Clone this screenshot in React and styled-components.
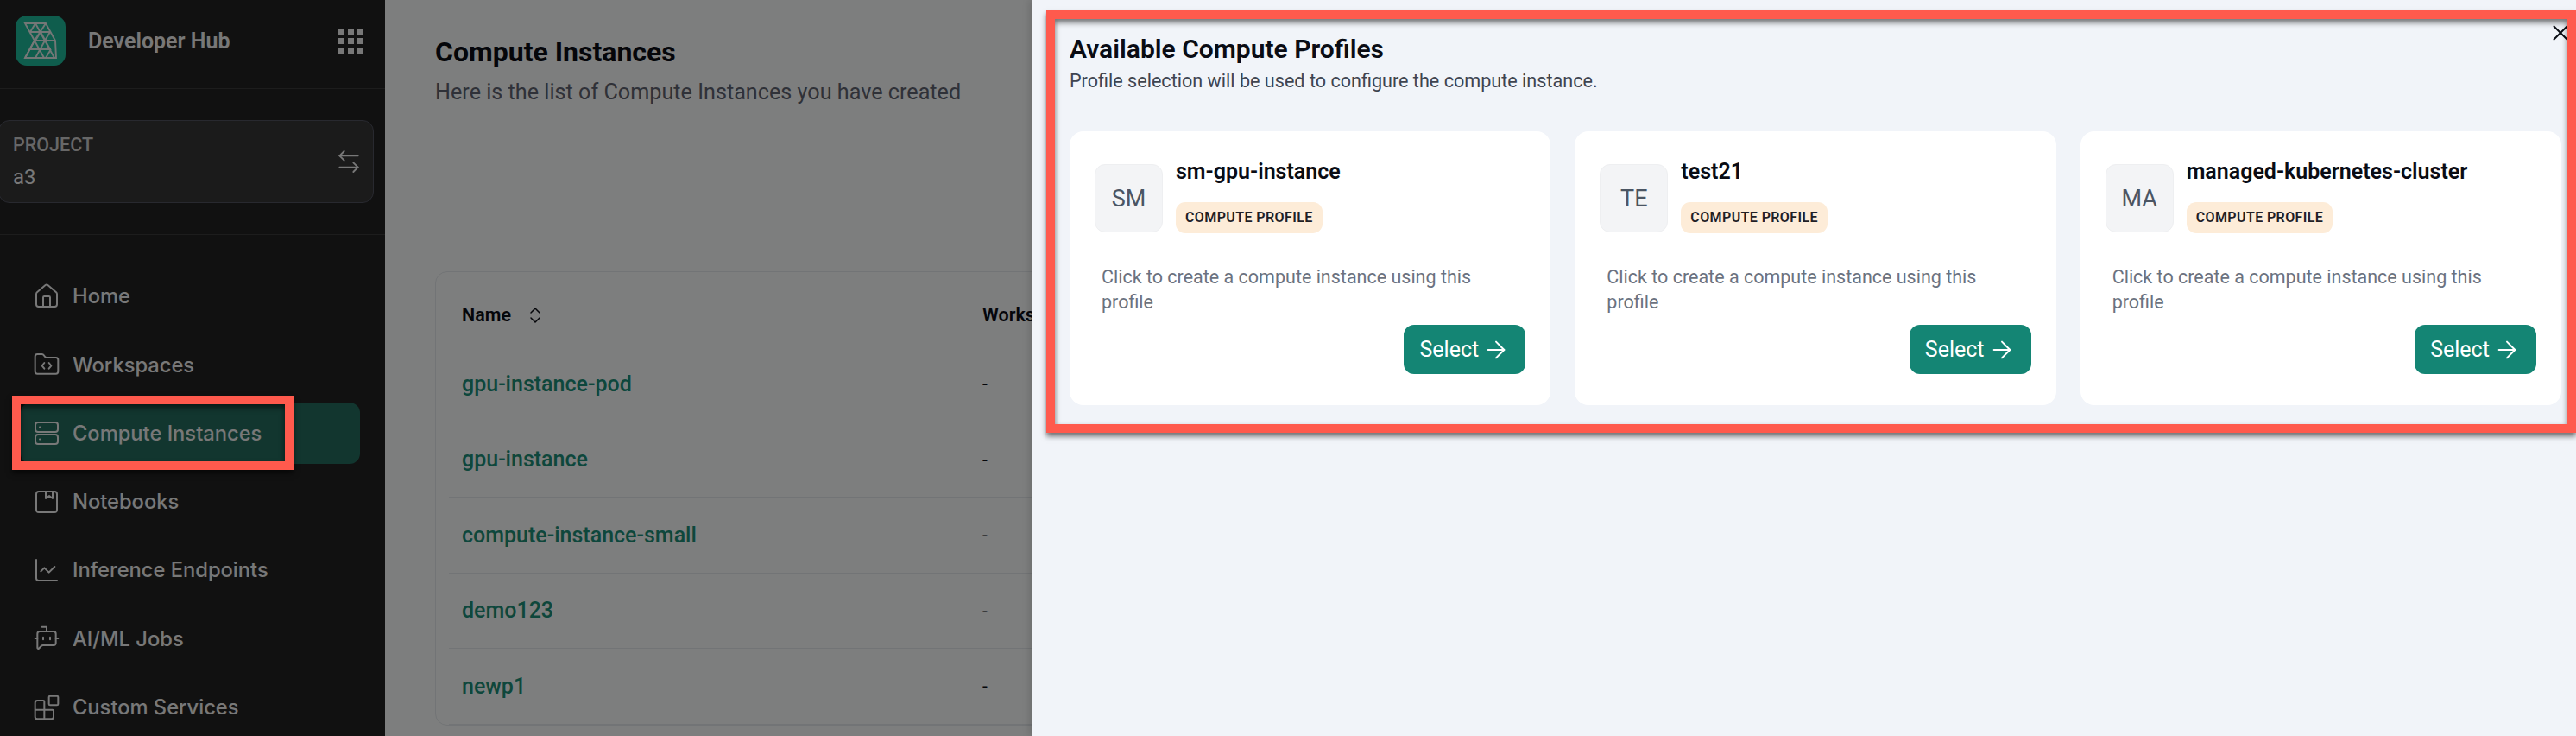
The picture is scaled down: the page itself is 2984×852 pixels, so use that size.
import React from 'react';
import styled, { createGlobalStyle } from 'styled-components';
import {
  House,
  FolderCode,
  ChartLine,
  BotMessageSquare,
  Blocks,
  ArrowLeftRight,
  ArrowRight,
  ChevronsUpDown,
  X
} from 'lucide-react';

const GlobalStyle = createGlobalStyle`
  html, body {
    margin: 0;
    padding: 0;
    background: #fbfdfc;
  }
  * {
    box-sizing: border-box;
  }
`;

const Page = styled.div`
  position: relative;
  display: flex;
  width: 2984px;
  height: 852px;
  overflow: hidden;
  font-family: Roboto, "Liberation Sans", sans-serif;
`;

const Sidebar = styled.aside`
  flex: 0 0 446px;
  display: flex;
  flex-direction: column;
  background: #222222;
  color: #f0f0f0;

  & > * {
    flex: 0 0 auto;
  }
`;

const Brand = styled.div`
  height: 103px;
  padding: 0 25px 8px 18px;
  display: flex;
  align-items: center;
  border-bottom: 1px solid #3a3a3a;
`;

const LogoMark = styled.div`
  width: 58px;
  height: 58px;
  border-radius: 13px;
  background: #1ebb9b;
  margin-right: 26px;
`;

const BrandName = styled.span`
  flex: 1;
  font-size: 25px;
  font-weight: 600;
`;

const AppGrid = styled.div`
  display: grid;
  grid-template-columns: repeat(3, 7px);
  grid-auto-rows: 7px;
  gap: 4px;

  span {
    background: #f0f0f0;
  }
`;

const ProjectSection = styled.div`
  padding: 36px 13px 36px 0;
  border-bottom: 1px solid #3a3a3a;
`;

const ProjectBox = styled.div`
  height: 96px;
  margin-left: -2px;
  padding: 0 12px 0 16px;
  display: flex;
  align-items: center;
  justify-content: space-between;
  background: #363636;
  border: 1px solid #50525f;
  border-radius: 13px;
`;

const ProjectLabel = styled.div`
  font-size: 21.5px;
  font-weight: 500;
  line-height: 30px;
  color: #cfcfcf;
`;

const ProjectName = styled.div`
  font-size: 24px;
  line-height: 32px;
  margin-top: 6px;
`;

const Nav = styled.nav`
  display: flex;
  flex-direction: column;
  gap: 7.8px;
  padding-top: 35px;
  font-family: Inter, Roboto, sans-serif;
`;

const NavRow = styled.div`
  flex: 0 0 71.5px;
  width: 393px;
  margin-left: 24px;
  padding-left: 14px;
  display: flex;
  align-items: center;
  gap: 14px;
  font-size: 23.7px;
  font-weight: 500;
  border-radius: 12px;
  background: ${props => props.active ? '#246c5e' : 'transparent'};

  svg {
    flex: 0 0 32px;
  }
`;

const Main = styled.main`
  flex: 1;
  min-width: 0;
  padding: 42px 0 0 58px;
  background: #fbfdfc;
`;

const Title = styled.h1`
  margin: 0;
  font-size: 32px;
  line-height: 36px;
  font-weight: 700;
  color: #0a0c14;
`;

const Subtitle = styled.p`
  margin: 13px 0 0;
  font-size: 25.2px;
  line-height: 32px;
  color: #5f6370;
`;

const TableCard = styled.section`
  margin: 191px 0 0 0;
  width: 1400px;
  padding: 0 15px;
  border: 1px solid #e4e8ec;
  border-radius: 14px;
`;

const TableRow = styled.div`
  height: 87.5px;
  padding-left: 15px;
  display: grid;
  grid-template-columns: 603px 1fr;
  align-items: center;
  border-bottom: 1.5px solid #e4e8ec;
`;

const HeaderRow = styled(TableRow)`
  height: 86px;
  padding-top: 14px;
  font-size: 21.5px;
  font-weight: 600;
  color: #0a0c14;
`;

const HeaderCell = styled.div`
  display: flex;
  align-items: center;
  gap: 16px;
`;

const NameCell = styled.div`
  font-size: 25px;
  font-weight: 500;
  color: #1c8f79;
`;

const DashCell = styled.div`
  font-size: 21px;
  color: #0a0c14;
`;

const Backdrop = styled.div`
  position: absolute;
  inset: 0;
  background: rgba(0, 0, 0, 0.5);
`;

const Drawer = styled.div`
  position: absolute;
  top: 0;
  bottom: 0;
  left: 1196px;
  right: 0;
  padding: 39px 17px 0 43px;
  background: #f1f4f9;
  box-shadow: -4px 0 8px rgba(0, 0, 0, 0.12);
`;

const CloseButton = styled.button`
  position: absolute;
  top: 23px;
  right: 3px;
  width: 30px;
  height: 30px;
  padding: 0;
  border: 0;
  background: none;
  color: #0a0c14;
`;

const DrawerTitle = styled.h2`
  margin: 0;
  font-size: 30px;
  line-height: 36px;
  font-weight: 600;
  color: #0a0c14;
`;

const DrawerHint = styled.p`
  margin: 5px 0 0;
  font-size: 21.6px;
  line-height: 28px;
  color: #3f4450;
`;

const Cards = styled.div`
  margin-top: 44px;
  display: grid;
  grid-template-columns: repeat(3, 1fr);
  gap: 28px;
`;

const Card = styled.article`
  height: 317px;
  padding: 38px 29px 36px 29px;
  display: flex;
  flex-direction: column;
  background: #ffffff;
  border-radius: 16px;
`;

const CardHead = styled.div`
  display: flex;
  gap: 15px;
`;

const Avatar = styled.div`
  flex: 0 0 79px;
  height: 79px;
  display: flex;
  align-items: center;
  justify-content: center;
  font-size: 27px;
  color: #4b5563;
  background: #f3f4f6;
  border: 1px solid #eeeff1;
  border-radius: 12px;
`;

const CardName = styled.div`
  margin-top: -4px;
  font-size: 25px;
  line-height: 26px;
  font-weight: 600;
  color: #0a0c14;
`;

const Badge = styled.span`
  display: inline-block;
  margin-top: 22px;
  height: 36px;
  padding: 0 11px;
  line-height: 36px;
  font-size: 16px;
  font-weight: 600;
  letter-spacing: 0.4px;
  color: #1f2027;
  background: #fdecd8;
  border-radius: 11px;
`;

const CardText = styled.p`
  margin: 36px 30px 0 8px;
  font-size: 21.5px;
  line-height: 29px;
  color: #6b7280;
`;

const SelectButton = styled.button`
  align-self: flex-end;
  margin-top: 12px;
  flex: 0 0 57px;
  width: 141px;
  display: flex;
  align-items: center;
  justify-content: center;
  gap: 4px;
  font-family: inherit;
  font-size: 25px;
  color: #ffffff;
  background: #148574;
  border: 0;
  border-radius: 12px;
`;

// annotation rectangles drawn on top of the screenshot
const Callout = styled.div`
  position: absolute;
  left: ${props => props.x}px;
  top: ${props => props.y}px;
  width: ${props => props.w}px;
  height: ${props => props.h}px;
  border: 10px solid #ff5a4d;
  box-shadow: 0 4px 6px rgba(0, 0, 0, 0.55), inset 0 4px 6px rgba(0, 0, 0, 0.55);
`;

const LogoIcon = () => (
  <svg width="58" height="58" viewBox="0 0 58 58" fill="none" stroke="#f0f0f0" strokeOpacity="0.95" strokeWidth="1.9">
    <path d="M11 9H35L46 29L47 49H11L22 29Z" />
    <path d="M17 19H40M22 29H46M17 39H41" />
    <path d="M23 9L17 19M23 9L34 29L45 49M35 9L22 29L11 49M29 19L23 29M29 19L40 39M34 29L23 49M22 29L33 49M40 19L34 29M41 39L35 49" />
  </svg>
);

const ServerIcon = () => (
  <svg width="32" height="32" viewBox="0 0 32 32" fill="none" stroke="currentColor" strokeWidth="2">
    <rect x="3" y="4" width="26" height="11" rx="3" />
    <rect x="3" y="18" width="26" height="11" rx="3" />
    <path d="M8 9.5h.5M8 23.5h.5" strokeLinecap="round" />
  </svg>
);

const NotebookIcon = () => (
  <svg width="32" height="32" viewBox="0 0 32 32" fill="none" stroke="currentColor" strokeWidth="2" strokeLinejoin="round">
    <rect x="4" y="4" width="24" height="24" rx="3" />
    <path d="M15 4v8l4-3 4 3V4" />
  </svg>
);

const navIcon = { size: 32, strokeWidth: 1.5 };

const navItems = [
  { label: 'Home', icon: <House {...navIcon} /> },
  { label: 'Workspaces', icon: <FolderCode {...navIcon} /> },
  { label: 'Compute Instances', icon: <ServerIcon />, active: true },
  { label: 'Notebooks', icon: <NotebookIcon /> },
  { label: 'Inference Endpoints', icon: <ChartLine {...navIcon} /> },
  { label: 'AI/ML Jobs', icon: <BotMessageSquare {...navIcon} /> },
  { label: 'Custom Services', icon: <Blocks {...navIcon} /> }
];

const instances = ['gpu-instance-pod', 'gpu-instance', 'compute-instance-small', 'demo123', 'newp1'];

const profiles = [
  { initials: 'SM', name: 'sm-gpu-instance' },
  { initials: 'TE', name: 'test21' },
  { initials: 'MA', name: 'managed-kubernetes-cluster' }
];

export default function App() {
  return (
    <Page>
      <GlobalStyle />
      <Sidebar>
        <Brand>
          <LogoMark><LogoIcon /></LogoMark>
          <BrandName>Developer Hub</BrandName>
          <AppGrid>
            {Array.from({ length: 9 }).map((_, i) => <span key={i} />)}
          </AppGrid>
        </Brand>
        <ProjectSection>
          <ProjectBox>
            <div>
              <ProjectLabel>PROJECT</ProjectLabel>
              <ProjectName>a3</ProjectName>
            </div>
            <ArrowLeftRight size={32} strokeWidth={1.4} />
          </ProjectBox>
        </ProjectSection>
        <Nav>
          {navItems.map(item => (
            <NavRow key={item.label} active={item.active}>
              {item.icon}
              <span>{item.label}</span>
            </NavRow>
          ))}
        </Nav>
      </Sidebar>

      <Main>
        <Title>Compute Instances</Title>
        <Subtitle>Here is the list of Compute Instances you have created</Subtitle>
        <TableCard>
          <HeaderRow>
            <HeaderCell>Name <ChevronsUpDown size={24} strokeWidth={1.5} /></HeaderCell>
            <div>Workspace</div>
          </HeaderRow>
          {instances.map(name => (
            <TableRow key={name}>
              <NameCell>{name}</NameCell>
              <DashCell>-</DashCell>
            </TableRow>
          ))}
        </TableCard>
      </Main>

      <Backdrop />

      <Drawer>
        <CloseButton><X size={30} strokeWidth={1.6} /></CloseButton>
        <DrawerTitle>Available Compute Profiles</DrawerTitle>
        <DrawerHint>Profile selection will be used to configure the compute instance.</DrawerHint>
        <Cards>
          {profiles.map(p => (
            <Card key={p.name}>
              <CardHead>
                <Avatar>{p.initials}</Avatar>
                <div>
                  <CardName>{p.name}</CardName>
                  <Badge>COMPUTE PROFILE</Badge>
                </div>
              </CardHead>
              <CardText>Click to create a compute instance using this profile</CardText>
              <SelectButton>Select <ArrowRight size={32} strokeWidth={1.5} /></SelectButton>
            </Card>
          ))}
        </Cards>
      </Drawer>

      <Callout x={14} y={458} w={326} h={86} />
      <Callout x={1212} y={12} w={1772} h={489} />
    </Page>
  );
}
